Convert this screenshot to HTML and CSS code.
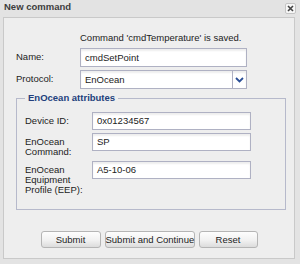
FILE: index.html
```html
<!DOCTYPE html>
<html lang="en">
<head>
    <meta charset="UTF-8" />
    <title>New command</title>
    <link rel="stylesheet" href="styles.css">
</head>
<body>

<div class="dialog">
    <div class="titlebar">
        <span class="title">New command</span>
        <span class="close">
            <svg viewBox="0 0 11 11" width="11" height="11">
                <path d="M3 3 L8 8 M8 3 L3 8" stroke="#444" stroke-width="1.6" fill="none"/>
            </svg>
        </span>
    </div>

    <div class="panel">
        <p class="message">Command 'cmdTemperature' is saved.</p>

        <div class="row">
            <label class="label">Name:</label>
            <div class="field">cmdSetPoint</div>
        </div>
        <div class="row">
            <label class="label">Protocol:</label>
            <div class="field select">
                <span class="select-value">EnOcean</span>
                <span class="select-arrow">
                    <svg viewBox="0 0 9 6" width="9" height="6">
                        <path d="M1 1 L4.5 4.5 L8 1" stroke="#2b4f96" stroke-width="1.8" fill="none"/>
                    </svg>
                </span>
            </div>
        </div>

        <fieldset class="attributes">
            <legend>EnOcean attributes</legend>
            <div class="row">
                <label class="label">Device ID:</label>
                <div class="field">0x01234567</div>
            </div>
            <div class="row">
                <label class="label">EnOcean<br>Command:</label>
                <div class="field">SP</div>
            </div>
            <div class="row">
                <label class="label">EnOcean<br>Equipment<br>Profile (EEP):</label>
                <div class="field">A5-10-06</div>
            </div>
        </fieldset>

        <div class="buttons">
            <button class="btn btn-submit">Submit</button>
            <button class="btn btn-continue">Submit and Continue</button>
            <button class="btn btn-reset">Reset</button>
        </div>
    </div>
</div>

</body>
</html>
```

FILE: styles.css
```css
:root {
    --bg: #e3e3e3;
    --panel: #eeeeee;
    --panel-border: #c9c9c9;
    --field-border: #afb1c3;
    --text: #222;
    --legend: #223f7c;
}

* {
    box-sizing: border-box;
    margin: 0;
    padding: 0;
}

body {
    font-family: 'Liberation Sans', Arial, sans-serif;
    font-size: 9.5px;
    color: var(--text);
    background: var(--bg);
    width: 300px;
    height: 264px;
    overflow: hidden;
}

.dialog {
    display: flex;
    flex-direction: column;
    height: 264px;
}

/* Barra del titolo */
.titlebar {
    height: 17px;
    display: flex;
    justify-content: space-between;
    align-items: flex-start;
    padding: 0 4px 0 4px;
}

.title {
    font-weight: 700;
    color: #3d3d3d;
    line-height: 14px;
}

.close {
    display: flex;
    margin-top: 3px;
    width: 11px;
    height: 11px;
    background: #f6f6f6;
    border: 1px solid #c4c4c4;
    border-radius: 2px;
}

.close svg {
    margin: -1px;
}

/* Pannello principale */
.panel {
    flex: 1;
    margin: 0 5px 5px 3px;
    background: var(--panel);
    border: 1px solid var(--panel-border);
    padding: 14px 0 0 12px;
}

.message {
    margin-left: 64px;
    line-height: 12px;
    margin-bottom: 4px;
}

.row {
    display: flex;
    align-items: flex-start;
    margin-bottom: 3px;
}

.label {
    width: 64px;
    line-height: 10px;
    padding-top: 4px;
}

.field {
    width: 167px;
    height: 19px;
    line-height: 17px;
    padding-left: 4px;
    background: #fff;
    border: 1px solid var(--field-border);
    box-shadow: inset 0 2px 2px rgba(0, 0, 0, 0.07);
}

.select {
    display: flex;
    padding-left: 0;
}

.select-value {
    flex: 1;
    padding-left: 4px;
}

.select-arrow {
    width: 14px;
    border-left: 1px solid var(--field-border);
    display: flex;
    align-items: center;
    justify-content: center;
}

/* Gruppo attributi EnOcean */
.attributes {
    width: 270px;
    margin-top: 3px;
    border: 1px solid #b6b9cb;
    padding: 8px 8px 11px 8px;
}

.attributes legend {
    font-weight: 700;
    color: var(--legend);
    padding: 0 3px;
    line-height: 12px;
}

.attributes .label {
    width: 67px;
}

.attributes .field {
    width: 159px;
    height: 18px;
    line-height: 16px;
}

.attributes .row:nth-child(3) {
    margin-bottom: 4px;
}

/* Pulsanti */
.buttons {
    display: flex;
    justify-content: center;
    gap: 4px;
    margin: 21px 0 0 -12px;
}

.btn {
    font-family: 'Liberation Sans', Arial, sans-serif;
    font-size: 9.5px;
    color: var(--text);
    height: 17px;
    padding: 0;
    white-space: nowrap;
    border: 1px solid #b5b5b5;
    border-radius: 3px;
    background: linear-gradient(#fdfdfd, #f1f1f1 55%, #dcdcdc);
}

.btn-submit {
    width: 60px;
}

.btn-continue {
    width: 90px;
}

.btn-reset {
    width: 59px;
}
```
